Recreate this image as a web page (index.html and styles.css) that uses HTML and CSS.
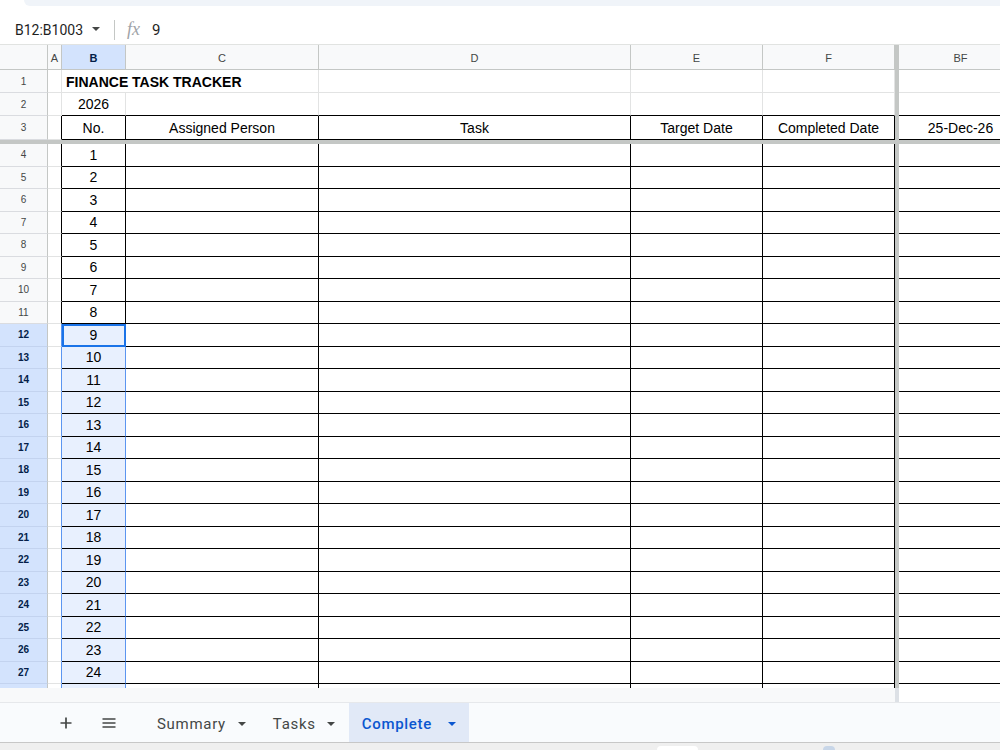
FILE: index.html
```html
<!DOCTYPE html>
<html lang="en">
<head>
    <meta charset="UTF-8">
    <meta name="viewport" content="width=device-width, initial-scale=1.0">
    <title>Finance Task Tracker</title>
    <link rel="stylesheet" href="styles.css">
</head>
<body>
    <div class="toolbar-edge"><div class="toolbar-box"></div></div>

    <div class="formula-bar">
        <div class="name-box">B12:B1003</div>
        <span class="caret"></span>
        <div class="fx-divider"></div>
        <span class="fx">fx</span>
        <span class="formula-value">9</span>
    </div>

    <div class="grid-view">
        <div class="grid" id="grid"></div>
    </div>

    <div class="scroll-strip">
        <div class="scroll-left"></div>
        <div class="scroll-freeze"></div>
        <div class="scroll-right"></div>
    </div>

    <div class="tab-bar">
        <svg class="tab-icon add-sheet" width="16" height="16" viewBox="0 0 16 16">
            <path d="M8 2.5v11M2.5 8h11" stroke="#444746" stroke-width="1.7" fill="none"/>
        </svg>
        <svg class="tab-icon all-sheets" width="16" height="16" viewBox="0 0 16 16">
            <path d="M1.5 4h13M1.5 8h13M1.5 12h13" stroke="#444746" stroke-width="1.6" fill="none"/>
        </svg>
        <div class="tab tab-summary">Summary<span class="caret"></span></div>
        <div class="tab tab-tasks">Tasks<span class="caret"></span></div>
        <div class="tab tab-active">Complete<span class="caret"></span></div>
    </div>

    <div class="os-strip">
        <div class="os-pill"></div>
        <div class="os-dot"></div>
    </div>

    <script>
        function addCell(cls, text) {
            const cell = document.createElement('div');
            cell.className = 'cell ' + cls;
            if (text !== undefined) cell.textContent = text;
            document.getElementById('grid').appendChild(cell);
            return cell;
        }

        function buildSheet() {
            const letters = ['A', 'B', 'C', 'D', 'E', 'F', '|', 'BF'];
            const headings = ['No.', 'Assigned Person', 'Task', 'Target Date', 'Completed Date'];

            // column headers
            addCell('corner');
            letters.forEach(function(l) {
                if (l === '|') addCell('freeze-v');
                else addCell('col-head' + (l === 'B' ? ' col-sel' : ''), l);
            });

            // row 28 only peeks out under the last full row, so it stays blank
            for (let r = 1; r <= 28; r++) {
                const sel = r >= 12;
                const inTable = r >= 3;
                const tb = inTable ? ' tb' : (r === 2 ? ' above-table' : '');

                addCell('row-head' + (sel ? ' row-sel' : ''), r < 28 ? r : undefined);
                addCell('col-a' + (inTable ? ' edge' : '') + (sel ? ' a-sel' : ''));

                if (r === 1) {
                    addCell('title', 'FINANCE TASK TRACKER');
                } else {
                    let bText;
                    if (r === 2) bText = '2026';
                    else if (r === 3) bText = headings[0];
                    else if (r < 28) bText = r - 3;
                    const b = addCell('num' + tb + (sel ? ' b-sel' : ''), bText);
                    if (r === 12) b.classList.add('active');
                    addCell('col-c' + tb, r === 3 ? headings[1] : undefined);
                }
                addCell('col-d' + tb, r === 3 ? headings[2] : undefined);
                addCell('col-e' + tb, r === 3 ? headings[3] : undefined);
                addCell('col-f' + tb, r === 3 ? headings[4] : undefined);
                addCell('freeze-v');
                addCell('col-bf' + tb, r === 3 ? '25-Dec-26' : undefined);

                // frozen rows divider
                if (r === 3) {
                    for (let i = 0; i < 9; i++) addCell('freeze-h');
                }
            }
        }

        buildSheet();
    </script>
</body>
</html>
```

FILE: styles.css
```css
body {
    margin: 0;
    background-color: #fff;
    font-family: Roboto, "Liberation Sans", Arial, sans-serif;
    color: #1f1f1f;
    overflow: hidden;
    height: 750px;
}

.toolbar-edge {
    height: 8px;
}
.toolbar-box {
    margin-left: 24px;
    height: 6px;
    background-color: #f0f4f9;
    border-bottom-left-radius: 14px;
}

.formula-bar {
    height: 29px;
    padding-top: 7px;
    border-bottom: 1px solid #e1e3e1;
    display: flex;
    align-items: center;
    padding-left: 15px;
}
.name-box {
    font-size: 14px;
    color: #1f1f1f;
    width: 77px;
}
.caret {
    display: inline-block;
    width: 0;
    height: 0;
    border-left: 4px solid transparent;
    border-right: 4px solid transparent;
    border-top: 4px solid #444746;
}
.formula-bar .caret {
    margin-bottom: 1px;
}
.fx-divider {
    width: 1px;
    height: 20px;
    background-color: #c4c7c5;
    margin-left: 14px;
}
.fx {
    font-family: "Liberation Serif", serif;
    font-style: italic;
    font-size: 18px;
    color: #a0a3a8;
    margin-left: 12px;
}
.formula-value {
    font-size: 15px;
    margin-left: 12px;
}

.grid-view {
    height: 643px;
    overflow: hidden;
}
.grid {
    display: grid;
    grid-template-columns: 48px 14px 64px 193px 312px 132px 132px 4px 124px;
    grid-template-rows: 25px 23px 23px 24px 4px;
    grid-auto-rows: 22.5px;
    width: 1023px;
    background-color: #fff;
}
.cell {
    box-sizing: border-box;
    border-right: 1px solid #e2e3e3;
    border-bottom: 1px solid #e2e3e3;
    display: flex;
    align-items: center;
    justify-content: center;
    white-space: nowrap;
    overflow: hidden;
    font-family: "Liberation Sans", Arial, sans-serif;
    font-size: 14px;
    color: #000;
}

.corner, .col-head {
    background-color: #f8f9fa;
    border-right-color: #c4c7c5;
    border-bottom-color: #c4c7c5;
    font-size: 11px;
    color: #444746;
    padding-top: 1px;
}
.col-sel {
    background-color: #d3e3fd;
    color: #041e49;
    font-weight: bold;
}
.row-head {
    background-color: #f8f9fa;
    border-right-color: #c4c7c5;
    border-bottom-color: #dadce0;
    font-size: 10px;
    color: #444746;
}
.row-sel {
    background-color: #d3e3fd;
    border-bottom-color: #c3d3ef;
    color: #041e49;
    font-weight: bold;
}

.title {
    grid-column: span 2;
    justify-content: flex-start;
    padding-left: 4px;
    padding-top: 2px;
    font-weight: bold;
}

.freeze-v, .freeze-h {
    background-color: #c4c7c5;
    border: none;
}

.above-table {
    border-bottom-color: #000;
}
.tb {
    border-right-color: #000;
    border-bottom-color: #000;
}
.edge {
    border-right-color: #000;
}

.b-sel {
    background-color: #e8f0fe;
    border-right-color: #5b95f0;
}
.a-sel {
    border-right-color: #5b95f0;
}
.active {
    outline: 2px solid #1a73e8;
    outline-offset: -2px;
}

.scroll-strip {
    height: 14px;
    display: flex;
}
.scroll-left {
    width: 895px;
    background-color: #f8f9fa;
}
.scroll-freeze {
    width: 4px;
    background-color: #dde1e6;
}
.scroll-right {
    flex: 1;
    background-color: #fff;
}

.tab-bar {
    height: 39px;
    border-top: 1px solid #e6e8eb;
    border-bottom: 1px solid #c7c7c7;
    background-color: #f9fbfd;
    display: flex;
    align-items: stretch;
    padding-left: 58px;
}
.tab-icon {
    align-self: center;
}
.all-sheets {
    margin-left: 27px;
}
.tab {
    display: flex;
    align-items: center;
    padding: 0 13px;
    padding-top: 2px;
    font-size: 15px;
    font-weight: 400;
    letter-spacing: 0.7px;
    color: #444746;
}
.tab .caret {
    margin-left: 12px;
}
.tab-summary {
    margin-left: 27px;
}
.tab-tasks {
    padding-left: 14px;
    padding-right: 14px;
}
.tab-tasks .caret {
    margin-left: 11px;
}
.tab-active {
    background-color: #e1e9f7;
    color: #0b57d0;
    font-weight: 500;
    width: 94px;
}
.tab-active .caret {
    margin-left: auto;
    border-top-color: #0b57d0;
}

.os-strip {
    height: 7px;
    background-color: #efefef;
    display: flex;
    align-items: flex-end;
    overflow: hidden;
}
.os-pill {
    margin-left: 657px;
    width: 41px;
    height: 4px;
    background-color: #fff;
    border-radius: 8px 8px 0 0;
}
.os-dot {
    margin-left: 125px;
    width: 12px;
    height: 4px;
    background-color: #c8d6e8;
    border-radius: 6px 6px 0 0;
}
```
